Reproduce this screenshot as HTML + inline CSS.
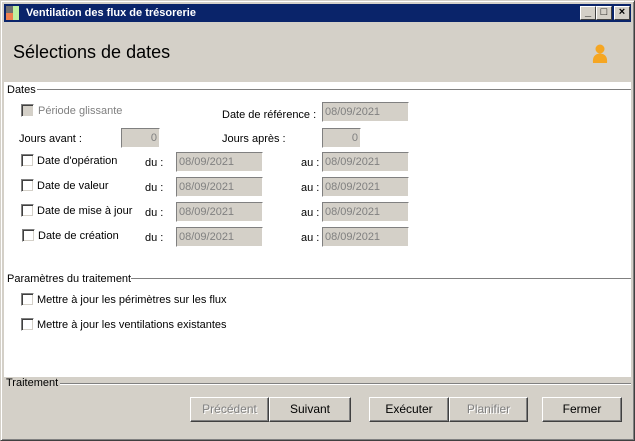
<!DOCTYPE html><html><head><style>
*{margin:0;padding:0;box-sizing:border-box}
body{width:635px;height:441px;background:#d4d0c8;font-family:"Liberation Sans",sans-serif;font-size:11px;position:relative;overflow:hidden;color:#000}
.a{position:absolute;white-space:nowrap}
.win{position:absolute;left:0;top:0;width:635px;height:441px;border:1px solid;border-color:#d4d0c8 #404040 #404040 #d4d0c8;box-shadow:inset 1px 1px #fff,inset -1px -1px #808080}
.title{position:absolute;left:4px;top:4px;width:627px;height:18px;background:#0a246a;color:#fff;font-weight:bold;font-size:11px;line-height:18px;padding-left:22px}
.tb{position:absolute;top:6px;width:16px;height:14px;background:#d4d0c8;border:1px solid;border-color:#fff #404040 #404040 #fff;font-size:11px;line-height:11px;text-align:center;font-weight:bold}
.white{position:absolute;left:4px;top:82px;width:627px;height:295px;background:#fff}
.cb{position:absolute;width:13px;height:13px;background:#fff;border:1px solid;border-color:#808080 #fff #fff #808080;box-shadow:inset 1px 1px #404040,inset -1px -1px #d4d0c8}
.in{position:absolute;height:20px;background:#d4d0c8;border:1px solid;border-color:#808080 #fff #fff #808080;color:#808080;font-size:11px;line-height:18px;padding:0 2px}
.ln{position:absolute;height:2px;border-top:1px solid #808080;border-bottom:1px solid #fff}
.bt{position:absolute;top:397px;height:25px;background:#d4d0c8;border:1px solid;border-color:#fff #404040 #404040 #fff;box-shadow:inset -1px -1px #808080;text-align:center;line-height:22px;font-size:12px}
.dis{color:#808080;text-shadow:1px 1px #fff}
</style></head><body>
<div class="win"></div>
<div class="title">Ventilation des flux de trésorerie</div>
<div class="a" style="left:6px;top:6px;width:7px;height:7px;background:#707070"></div>
<div class="a" style="left:6px;top:13px;width:7px;height:7px;background:#f08050"></div>
<div class="a" style="left:13px;top:6px;width:6px;height:14px;background:#c0f0a0"></div>
<div class="tb" style="left:580px">_</div>
<div class="tb" style="left:596px">□</div>
<div class="tb" style="left:614px">×</div>
<div class="a" style="left:13px;top:42px;font-size:18px">Sélections de dates</div>
<svg class="a" style="left:591px;top:43px" width="18" height="22"><circle cx="9" cy="6" r="4.5" fill="#f5a623"/><path d="M2 20 Q1 11 9 10.5 Q17 11 16 20 Z" fill="#f5a623"/></svg>
<div class="white"></div>
<div class="a" style="left:7px;top:84px">Dates</div>
<div class="ln" style="left:37px;top:89px;width:594px"></div>
<div class="cb" style="left:21px;top:104px;background:#d4d0c8"></div>
<div class="a dis" style="left:38px;top:105px;text-shadow:none">Période glissante</div>
<div class="a" style="left:222px;top:109px">Date de référence :</div>
<div class="in" style="left:322px;top:102px;width:87px">08/09/2021</div>
<div class="a" style="left:19px;top:133px">Jours avant :</div>
<div class="in" style="left:121px;top:128px;width:39px;text-align:right">0</div>
<div class="a" style="left:222px;top:133px">Jours après :</div>
<div class="in" style="left:322px;top:128px;width:39px;text-align:right">0</div>
<div class="cb" style="left:21px;top:154px"></div><div class="a" style="left:37px;top:155px">Date d'opération</div><div class="a" style="left:145px;top:157px">du :</div><div class="in" style="left:176px;top:152px;width:87px">08/09/2021</div><div class="a" style="left:301px;top:157px">au :</div><div class="in" style="left:322px;top:152px;width:87px">08/09/2021</div>
<div class="cb" style="left:21px;top:179px"></div><div class="a" style="left:37px;top:180px">Date de valeur</div><div class="a" style="left:145px;top:182px">du :</div><div class="in" style="left:176px;top:177px;width:87px">08/09/2021</div><div class="a" style="left:301px;top:182px">au :</div><div class="in" style="left:322px;top:177px;width:87px">08/09/2021</div>
<div class="cb" style="left:21px;top:204px"></div><div class="a" style="left:37px;top:205px">Date de mise à jour</div><div class="a" style="left:145px;top:207px">du :</div><div class="in" style="left:176px;top:202px;width:87px">08/09/2021</div><div class="a" style="left:301px;top:207px">au :</div><div class="in" style="left:322px;top:202px;width:87px">08/09/2021</div>
<div class="cb" style="left:22px;top:229px"></div><div class="a" style="left:38px;top:230px">Date de création</div><div class="a" style="left:145px;top:232px">du :</div><div class="in" style="left:176px;top:227px;width:87px">08/09/2021</div><div class="a" style="left:301px;top:232px">au :</div><div class="in" style="left:322px;top:227px;width:87px">08/09/2021</div>
<div class="a" style="left:7px;top:273px">Paramètres du traitement</div>
<div class="ln" style="left:131px;top:278px;width:500px"></div>
<div class="cb" style="left:21px;top:293px"></div><div class="a" style="left:37px;top:294px">Mettre à jour les périmètres sur les flux</div>
<div class="cb" style="left:21px;top:318px"></div><div class="a" style="left:37px;top:319px">Mettre à jour les ventilations existantes</div>
<div class="a" style="left:6px;top:377px">Traitement</div>
<div class="ln" style="left:60px;top:383px;width:571px"></div>
<div class="bt dis" style="left:190px;width:79px">Précédent</div>
<div class="bt" style="left:269px;width:82px">Suivant</div>
<div class="bt" style="left:369px;width:80px">Exécuter</div>
<div class="bt dis" style="left:449px;width:79px">Planifier</div>
<div class="bt" style="left:542px;width:80px">Fermer</div>
</body></html>
